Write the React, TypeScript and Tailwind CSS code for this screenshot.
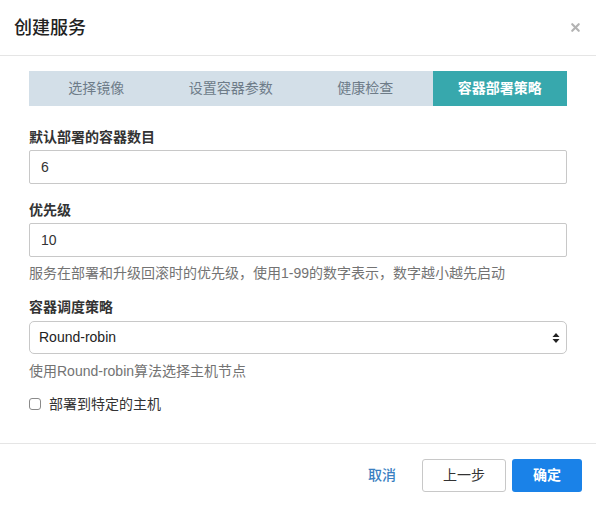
import { X } from 'lucide-react'

const TABS = ['选择镜像', '设置容器参数', '健康检查', '容器部署策略']
const ACTIVE_TAB = 3

const FONT = "font-['Liberation_Sans','Noto_Sans_CJK_SC',sans-serif]"

function FieldLabel({ children }: { children: React.ReactNode }) {
  return <div className="text-[14px] leading-[20px] font-bold text-[#333]">{children}</div>
}

function HelpText({ children }: { children: React.ReactNode }) {
  return <div className="text-[14px] leading-[20px] text-[#737373]">{children}</div>
}

function TextInput({ value }: { value: string }) {
  return (
    <div className="h-[34px] flex items-center px-[11px] border border-[#c8c8c8] rounded-[2px] bg-white text-[14px] text-[#333]">
      {value}
    </div>
  )
}

export default function App() {
  return (
    <div className={`${FONT} w-[596px] h-[505px] bg-white flex flex-col`}>
      {/* header */}
      <div className="h-[56px] flex items-center justify-between pl-[14px] pr-[14px] border-b border-[#e5e5e5]">
        <span className="text-[18px] font-medium text-[#222] leading-none">创建服务</span>
        <X className="w-[13px] h-[13px] text-[#b3b3b3]" strokeWidth={4} />
      </div>

      {/* body */}
      <div className="flex-1 flex flex-col pl-[29px] pr-[29px] pt-[15px]">
        <div className="grid grid-cols-4 h-[35px] bg-[#d3dfe8]">
          {TABS.map((t, i) => (
            <div
              key={t}
              className={
                i === ACTIVE_TAB
                  ? 'flex items-center justify-center bg-[#37a8ad] text-white text-[14px] font-bold'
                  : 'flex items-center justify-center text-[#6e7c88] text-[14px]'
              }
            >
              {t}
            </div>
          ))}
        </div>

        <div className="mt-[21px]">
          <FieldLabel>默认部署的容器数目</FieldLabel>
          <div className="mt-[3px]">
            <TextInput value="6" />
          </div>
        </div>

        <div className="mt-[16px]">
          <FieldLabel>优先级</FieldLabel>
          <div className="mt-[3px]">
            <TextInput value="10" />
          </div>
          <div className="mt-[6px]">
            <HelpText>服务在部署和升级回滚时的优先级，使用1-99的数字表示，数字越小越先启动</HelpText>
          </div>
        </div>

        <div className="mt-[14px]">
          <FieldLabel>容器调度策略</FieldLabel>
          <div className="mt-[4px] h-[33px] flex items-center justify-between pl-[9px] pr-[6px] border border-[#c8c8c8] rounded-[5px] bg-white text-[14px] text-[#222]">
            <span>Round-robin</span>
            <svg width="8" height="12" viewBox="0 0 8 12" className="text-[#222]">
              <path d="M4 1 L7.5 5 L0.5 5 Z" fill="currentColor" />
              <path d="M4 11 L7.5 7 L0.5 7 Z" fill="currentColor" />
            </svg>
          </div>
          <div className="mt-[7px]">
            <HelpText>使用Round-robin算法选择主机节点</HelpText>
          </div>
        </div>

        <label className="mt-[13px] flex items-center gap-[8px] text-[14px] leading-[20px] text-[#333]">
          <span className="w-[12px] h-[12px] border border-[#8a8a8a] rounded-[3px] bg-white" />
          <span>部署到特定的主机</span>
        </label>
      </div>

      {/* footer */}
      <div className="h-[62px] border-t border-[#e5e5e5] flex items-center justify-end gap-[6px] pr-[14px] pt-[1px]">
        <button className="h-[33px] px-[12px] text-[14px] text-[#3a7fc1] font-medium mr-[8px]">取消</button>
        <button className="h-[33px] w-[84px] border border-[#c8c8c8] rounded-[3px] bg-white text-[14px] text-[#333]">
          上一步
        </button>
        <button className="h-[33px] w-[70px] rounded-[3px] bg-[#1a82e8] text-[14px] text-white font-bold">
          确定
        </button>
      </div>
    </div>
  )
}
